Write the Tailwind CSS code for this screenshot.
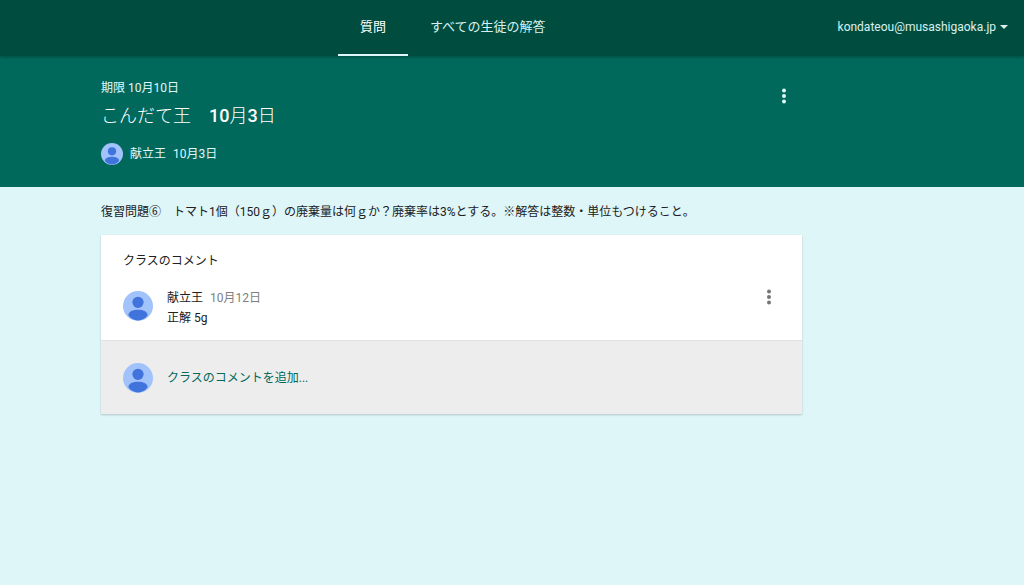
<!DOCTYPE html>
<html lang="ja">
<head>
<meta charset="utf-8">
<meta name="viewport" content="width=device-width, initial-scale=1">
<title>こんだて王　10月3日</title>
<script src="https://cdn.jsdelivr.net/npm/@tailwindcss/browser@4"></script>
</head>
<body class="min-h-screen bg-[#def6f8] font-[Roboto,'Noto_Sans_CJK_JP',sans-serif] text-xs text-[#212121]">
<svg class="hidden" aria-hidden="true">
  <symbol id="avatar" viewBox="0 0 30 30">
    <circle cx="15" cy="15" r="15" fill="#a1c2fa"/>
    <circle cx="15" cy="11.3" r="5.6" fill="#4173dd"/>
    <path d="M5.400 24.200C5.400 20.600 10.300 18.800 15 18.800S24.600 20.600 24.600 24.200C22.400 27.600 19 29.400 15 29.400S7.600 27.600 5.400 24.200Z" fill="#4173dd"/>
  </symbol>
  <symbol id="more" viewBox="0 0 6 18">
    <circle cx="3" cy="3.500" r="2"/><circle cx="3" cy="9" r="2"/><circle cx="3" cy="14.500" r="2"/>
  </symbol>
</svg>

<header class="relative flex h-14 items-stretch justify-between bg-[#004d40] text-[#d9f1ee] shadow-[0_1px_3px_rgba(0,0,0,0.3)]">
  <nav class="ml-[33%] flex text-[13px] leading-5">
    <a href="#" aria-current="page" class="flex items-center border-b-2 border-[#e0f7fa] px-[22px] text-white">質問</a>
    <a href="#" class="flex items-center border-b-2 border-transparent px-[22px]">すべての生徒の解答</a>
  </nav>
  <button type="button" class="mr-4 flex items-center gap-1 pb-0.5">
    kondateou@musashigaoka.jp
    <svg class="h-1 w-2" viewBox="0 0 8 4" fill="currentColor" aria-hidden="true"><path d="M0 0h8L4 4z"/></svg>
  </button>
</header>

<section class="bg-[#00695c] pb-[22px] pl-[101px] pt-[23px] text-[#e0f7fa]">
  <div class="flex max-w-[701px] items-start justify-between pr-[15px]">
    <div>
      <p class="leading-[18px]">期限 10月10日</p>
      <h1 class="mt-[3px] text-lg leading-8 font-light text-white">こんだて王　<b class="font-medium">10</b>月<b class="font-medium">3</b>日</h1>
      <div class="mt-[11px] flex items-center gap-[7px]">
        <svg class="size-[22px]" aria-hidden="true"><use href="#avatar"/></svg>
        <span>献立王</span>
        <span>10月3日</span>
      </div>
    </div>
    <button type="button" aria-label="その他" class="mt-2"><svg class="h-[18px] w-1.5" fill="currentColor"><use href="#more"/></svg></button>
  </div>
</section>

<main class="pl-[101px] pr-4">
  <p class="pb-[13px] pt-[15px] leading-5">復習問題⑥　トマト1個（150ｇ）の廃棄量は何ｇか？廃棄率は3%とする。※解答は整数・単位もつけること。</p>
  <section class="max-w-[701px] bg-white shadow-[0_1px_2px_rgba(0,0,0,0.2)]">
    <div class="px-[22px] pb-3 pt-4">
      <h2 class="leading-5">クラスのコメント</h2>
      <div class="mt-[17px] flex items-start">
        <svg class="mt-[3px] size-[30px]" aria-hidden="true"><use href="#avatar"/></svg>
        <div class="ml-[14px] flex-1 leading-5">
          <p>献立王<span class="ml-[7px] text-[#808080]">10月12日</span></p>
          <p>正解 5g</p>
        </div>
        <button type="button" aria-label="その他" class="mr-2"><svg class="h-[18px] w-1.5" fill="#757575"><use href="#more"/></svg></button>
      </div>
    </div>
    <div class="flex items-center gap-[14px] border-t border-[#e0e0e0] bg-[#ededed] px-[22px] pb-[21px] pt-[22px]">
      <svg class="size-[30px]" aria-hidden="true"><use href="#avatar"/></svg>
      <button type="button" class="text-[#00695c]">クラスのコメントを追加...</button>
    </div>
  </section>
</main>
</body>
</html>
